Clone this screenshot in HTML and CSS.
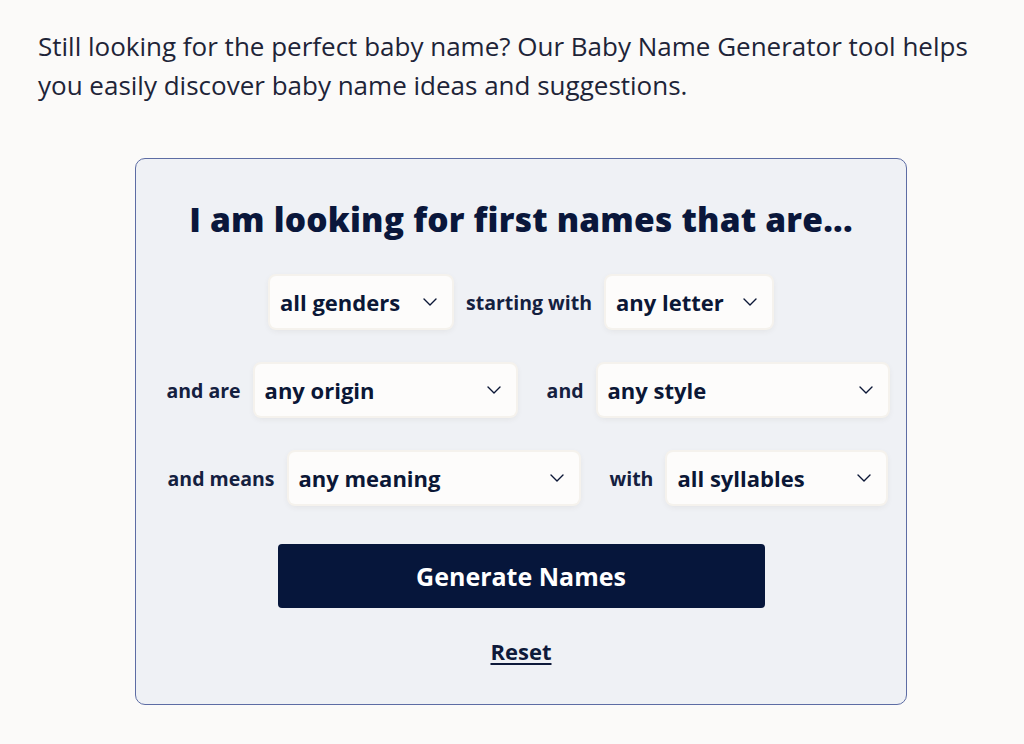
FILE: index.html
```html
<!DOCTYPE html>
<html lang="en">
<head>
<meta charset="utf-8">
<title>Baby Name Generator</title>
<link rel="stylesheet" href="styles.css">
</head>
<body>
<main class="page">
  <p class="intro">Still looking for the perfect baby name? Our Baby Name Generator tool helps you easily discover baby name ideas and suggestions.</p>

  <form class="card">
    <h2 class="card-title">I am looking for first names that are...</h2>

    <div class="row">
      <button type="button" class="picker w-gender"><span>all genders</span><svg class="chev" viewBox="0 0 14 8"><polyline points="1,1 7,7 13,1"/></svg></button>
      <span class="label">starting with</span>
      <button type="button" class="picker w-letter"><span>any letter</span><svg class="chev" viewBox="0 0 14 8"><polyline points="1,1 7,7 13,1"/></svg></button>
    </div>

    <div class="row row-pair">
      <div class="field">
        <span class="label">and are</span>
        <button type="button" class="picker w-origin"><span>any origin</span><svg class="chev" viewBox="0 0 14 8"><polyline points="1,1 7,7 13,1"/></svg></button>
      </div>
      <div class="field">
        <span class="label">and</span>
        <button type="button" class="picker w-style"><span>any style</span><svg class="chev" viewBox="0 0 14 8"><polyline points="1,1 7,7 13,1"/></svg></button>
      </div>
    </div>

    <div class="row row-pair">
      <div class="field">
        <span class="label">and means</span>
        <button type="button" class="picker w-meaning"><span>any meaning</span><svg class="chev" viewBox="0 0 14 8"><polyline points="1,1 7,7 13,1"/></svg></button>
      </div>
      <div class="field">
        <span class="label">with</span>
        <button type="button" class="picker w-syll"><span>all syllables</span><svg class="chev" viewBox="0 0 14 8"><polyline points="1,1 7,7 13,1"/></svg></button>
      </div>
    </div>

    <button type="button" class="generate">Generate Names</button>
    <a class="reset" href="#">Reset</a>
  </form>
</main>
</body>
</html>
```

FILE: styles.css
```css
* { box-sizing: border-box; }

body {
  margin: 0;
  background: #fbfaf9;
  color: #1b2139;
  font-family: "Open Sans", Lato, sans-serif;
}

.page {
  padding: 27px 20px 0 38px;
}

.intro {
  margin: 0;
  font-size: 26px;
  line-height: 39px;
  color: #1e2438;
}

.card {
  width: 772px;
  margin: 53px auto 0;
  padding: 36px 0 38px;
  background: #eff1f5;
  border: 1px solid #5d6ca4;
  border-radius: 10px;
  display: flex;
  flex-direction: column;
  align-items: center;
}

.card-title {
  margin: 0 0 33px;
  font-size: 33.5px;
  line-height: 48px;
  font-weight: 800;
  letter-spacing: 0.2px;
  color: #0a173b;
}

.row {
  display: flex;
  align-items: center;
  justify-content: center;
  gap: 14px;
  margin-bottom: 36px;
}

.row-pair { padding-left: 12px; }

.row .field + .field { margin-left: 17px; }

.field {
  display: flex;
  align-items: center;
  gap: 14px;
}

.label {
  font-size: 19.5px;
  font-weight: 700;
  color: #14203f;
}

.picker {
  height: 52px;
  padding: 0 15px 0 10px;
  display: flex;
  align-items: center;
  justify-content: space-between;
  background: #fdfcfb;
  border: none;
  border-radius: 6px;
  box-shadow: 0 0 0 2px #f5f2ed, 0 2px 7px rgba(70, 60, 40, 0.10);
  font-family: inherit;
  font-size: 22px;
  font-weight: 700;
  color: #0b1736;
  cursor: pointer;
}

.chev {
  width: 14px;
  height: 8px;
  flex: none;
  fill: none;
  stroke: #0b1736;
  stroke-width: 1.4;
  stroke-linecap: round;
  stroke-linejoin: round;
}

.w-gender { width: 182px; }
.w-letter { width: 166px; }
.w-origin { width: 261px; }
.w-style { width: 290px; }
.w-meaning { width: 290px; }
.w-syll { width: 219px; }

.generate {
  width: 487px;
  height: 64px;
  margin-top: 4px;
  background: #06163b;
  border: none;
  border-radius: 4px;
  color: #ffffff;
  font-family: inherit;
  font-size: 25px;
  font-weight: 700;
  cursor: pointer;
}

.reset {
  margin-top: 28px;
  font-size: 22px;
  font-weight: 700;
  color: #0e1a3a;
  text-decoration: underline;
  text-underline-offset: 3px;
  text-decoration-thickness: 2px;
}
```
